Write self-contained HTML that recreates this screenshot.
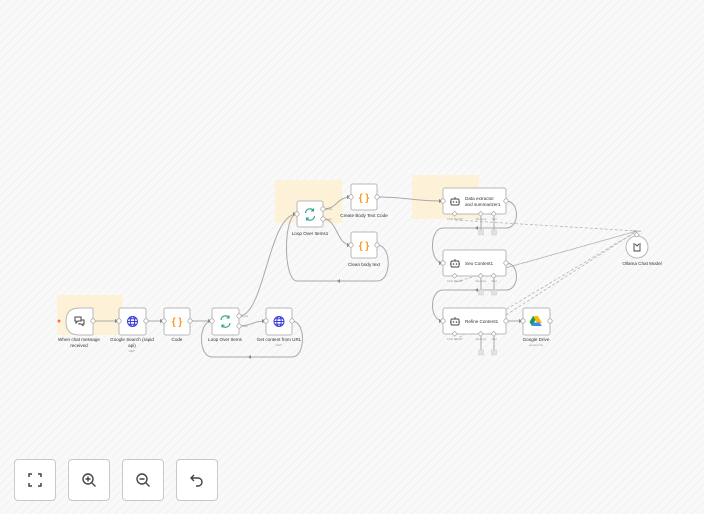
<!DOCTYPE html>
<html><head><meta charset="utf-8"><style>
html,body{margin:0;padding:0}
body{width:704px;height:514px;overflow:hidden;background:#f7f7f7;font-family:"Liberation Sans",sans-serif;position:relative}
.btn{position:absolute;top:459px;width:42px;height:42px;border:1px solid #c9c9cc;border-radius:4px;background:#fff;box-sizing:border-box}
.btn svg{position:absolute;left:12px;top:12px}
</style></head><body>
<svg width="704" height="514" style="position:absolute;left:0;top:0" font-family="Liberation Sans, sans-serif">
<defs>
<pattern id="st" width="6" height="6" patternUnits="userSpaceOnUse" patternTransform="rotate(45)">
<rect width="6" height="6" fill="#f9f9f9"/><rect width="1" height="6" fill="#f1f1f1"/>
</pattern>
</defs>
<rect width="704" height="514" fill="url(#st)"/>
<rect x="57" y="295" width="66" height="40" fill="#fdf2d8"/>
<rect x="275" y="180" width="67" height="43" fill="#fdf2d8"/>
<rect x="412" y="175" width="67" height="44" fill="#fdf2d8"/>
<g fill="none" stroke="#a9a9a9" stroke-width="1">
<path d="M93 321 H119"/><path d="M146 321 H164"/><path d="M190 321 H212"/>
<path d="M239 326 C252 326,252 321,266 321"/>
<path d="M292 321 C306 321,306 357,292 357 H212 C198 357,198 321,212 321"/>
<path d="M239 316 C265 316,268 214,297 214"/>
<path d="M323 209 C338 209,336 197,351 197"/>
<path d="M323 219 C338 219,336 245,351 245"/>
<path d="M377 245 C392 245,392 281,377 281 H297 C283 281,283 214,297 214"/>
<path d="M377 197 C410 197,410 201,443 201"/>
<path d="M506 201 C520 201,520 228,506 228 H443 C429 228,429 263,443 263"/>
<path d="M506 263 C520 263,520 290,506 290 H443 C429 290,429 321,443 321"/>
<path d="M506 321 H523"/>
<path d="M481 214 V230"/><path d="M494 214 V230"/>
<path d="M481 276 V290"/><path d="M494 276 V290"/>
<path d="M481 334 V350"/><path d="M494 334 V350"/>
</g>
<g fill="none" stroke="#b5b5b5" stroke-width="0.8" stroke-dasharray="3 2">
<path d="M455 220 L637 231"/><path d="M506 268 L637 231"/><path d="M506 315 L637 231"/><path d="M455 282 L637 231"/><path d="M455 340 L637 231"/>
</g>
<g fill="#888"><path d="M119 321 l-4 -2 v4z"/><path d="M164 321 l-4 -2 v4z"/><path d="M212 321 l-4 -2 v4z"/><path d="M266 321 l-4 -2 v4z"/><path d="M297 214 l-4 -2 v4z"/><path d="M351 197 l-4 -2 v4z"/><path d="M351 245 l-4 -2 v4z"/><path d="M443 201 l-4 -2 v4z"/><path d="M443 263 l-4 -2 v4z"/><path d="M443 321 l-4 -2 v4z"/><path d="M523 321 l-4 -2 v4z"/>
<path d="M248 357 l3 -2 v4z"/><path d="M337 281 l3 -2 v4z"/><path d="M475 228 l3 -2 v4z"/><path d="M475 290 l3 -2 v4z"/></g>
<g fill="#e2e2e2" stroke="#ccc" stroke-width="0.5">
<rect x="478.5" y="230" width="5" height="5"/><rect x="491.5" y="230" width="5" height="5"/>
<rect x="478.5" y="290" width="5" height="5"/><rect x="491.5" y="290" width="5" height="5"/>
<rect x="478.5" y="350" width="5" height="5"/><rect x="491.5" y="350" width="5" height="5"/>
</g>
<g fill="#fff" stroke="#b8b8b8" stroke-width="1">
<path d="M79 308 H92 Q93 308 93 309 V334 Q93 335 92 335 H79 Q66 335 66 321.5 Q66 308 79 308Z"/>
<rect x="119" y="308" width="27" height="27" rx="2"/>
<rect x="164" y="308" width="26" height="27" rx="2"/>
<rect x="212" y="308" width="27" height="27" rx="2"/>
<rect x="266" y="308" width="26" height="27" rx="2"/>
<rect x="297" y="201" width="26" height="26" rx="2"/>
<rect x="351" y="184" width="26" height="26" rx="2"/>
<rect x="351" y="232" width="26" height="26" rx="2"/>
<rect x="443" y="188" width="63" height="26" rx="2"/>
<rect x="443" y="250" width="63" height="26" rx="2"/>
<rect x="443" y="308" width="63" height="26" rx="2"/>
<rect x="523" y="308" width="27" height="27" rx="2"/>
<circle cx="637" cy="247" r="11"/>
</g>
<g fill="#fff" stroke="#999" stroke-width="0.7">
<circle cx="93" cy="321" r="2.2"/><circle cx="119" cy="321" r="2.2"/><circle cx="146" cy="321" r="2.2"/><circle cx="164" cy="321" r="2.2"/><circle cx="190" cy="321" r="2.2"/><circle cx="212" cy="321" r="2.2"/><circle cx="239" cy="316" r="2.2"/><circle cx="239" cy="326" r="2.2"/><circle cx="266" cy="321" r="2.2"/><circle cx="292" cy="321" r="2.2"/>
<circle cx="297" cy="214" r="2.2"/><circle cx="323" cy="209" r="2.2"/><circle cx="323" cy="219" r="2.2"/><circle cx="351" cy="197" r="2.2"/><circle cx="377" cy="197" r="2.2"/><circle cx="351" cy="245" r="2.2"/><circle cx="377" cy="245" r="2.2"/>
<circle cx="443" cy="201" r="2.2"/><circle cx="506" cy="201" r="2.2"/><circle cx="443" cy="263" r="2.2"/><circle cx="506" cy="263" r="2.2"/><circle cx="443" cy="321" r="2.2"/><circle cx="506" cy="321" r="2.2"/><circle cx="523" cy="321" r="2.2"/><circle cx="550" cy="321" r="2.2"/>
</g>
<g fill="#fff" stroke="#999" stroke-width="0.6">
<rect x="453" y="212" width="3.5" height="3.5" transform="rotate(45 454.7 213.7)"/><rect x="479" y="212" width="3.5" height="3.5" transform="rotate(45 480.7 213.7)"/><rect x="492" y="212" width="3.5" height="3.5" transform="rotate(45 493.7 213.7)"/>
<rect x="453" y="274" width="3.5" height="3.5" transform="rotate(45 454.7 275.7)"/><rect x="479" y="274" width="3.5" height="3.5" transform="rotate(45 480.7 275.7)"/><rect x="492" y="274" width="3.5" height="3.5" transform="rotate(45 493.7 275.7)"/>
<rect x="453" y="332" width="3.5" height="3.5" transform="rotate(45 454.7 333.7)"/><rect x="479" y="332" width="3.5" height="3.5" transform="rotate(45 480.7 333.7)"/><rect x="492" y="332" width="3.5" height="3.5" transform="rotate(45 493.7 333.7)"/>
<rect x="635" y="233" width="3.5" height="3.5" transform="rotate(45 636.7 234.7)"/>
</g>
<circle cx="59" cy="321" r="1.5" fill="#ff6d5a"/>
<g fill="none" stroke="#444" stroke-width="1">
<path d="M75 317 h6 v4 h-3 l-2 2 v-2 h-1z"/><path d="M81 320 h3 v4 h-1 v1.5 l-2 -1.5 h-2 v-1"/>
</g>
<g fill="none" stroke="#3b3bdc" stroke-width="1">
<circle cx="132.5" cy="321.5" r="5"/><ellipse cx="132.5" cy="321.5" rx="2.2" ry="5"/><path d="M127.5 321.5 h10 M128.5 318.7 h8 M128.5 324.3 h8"/>
<circle cx="279" cy="321.5" r="5"/><ellipse cx="279" cy="321.5" rx="2.2" ry="5"/><path d="M274 321.5 h10 M275 318.7 h8 M275 324.3 h8"/>
</g>
<g font-size="10" fill="#ff9922" text-anchor="middle" font-weight="bold">
<text x="177" y="325">{ }</text><text x="364" y="201">{ }</text><text x="364" y="249">{ }</text>
</g>
<g fill="none" stroke="#2a9d8f" stroke-width="1.1">
<path d="M221 320 a4.5 4.5 0 0 1 8 -2.5 M230 323 a4.5 4.5 0 0 1 -8 2.5"/><path d="M229 315.5 v2.5 h-2.5 M222 327.5 v-2.5 h2.5"/>
<path d="M305.5 213 a4.5 4.5 0 0 1 8 -2.5 M314.5 216 a4.5 4.5 0 0 1 -8 2.5"/><path d="M313.5 208.5 v2.5 h-2.5 M306.5 220.5 v-2.5 h2.5"/>
</g>
<g fill="none" stroke="#444" stroke-width="0.9">
<rect x="451" y="199" width="8" height="6" rx="1"/><path d="M455 197 v2 M450 202 h1 M459 202 h1"/>
<rect x="451" y="261" width="8" height="6" rx="1"/><path d="M455 259 v2 M450 264 h1 M459 264 h1"/>
<rect x="451" y="319" width="8" height="6" rx="1"/><path d="M455 317 v2 M450 322 h1 M459 322 h1"/>
<path d="M634 243 v8 h6 v-8 M635 244 l2 2 l2 -2"/>
</g>
<g fill="#444"><circle cx="453.5" cy="202" r=".8"/><circle cx="456.5" cy="202" r=".8"/><circle cx="453.5" cy="264" r=".8"/><circle cx="456.5" cy="264" r=".8"/><circle cx="453.5" cy="322" r=".8"/><circle cx="456.5" cy="322" r=".8"/></g>
<g>
<path d="M533 316 h5 l4 7 h-5z" fill="#ffba00"/><path d="M533 316 l-3.5 6 l2.5 4 l3.5 -6z" fill="#0f9d58"/><path d="M532 326 h10 l-2.5 -3.5 h-5.5z" fill="#4285f4"/>
</g>
<g font-size="4.6" fill="#333" text-anchor="middle">
<text x="79" y="341">When chat message</text><text x="79" y="347">received</text>
<text x="132" y="341">Google Search (rapid</text><text x="132" y="347">api)</text>
<text x="177" y="341">Code</text>
<text x="225" y="341">Loop Over Items</text>
<text x="279" y="341">Get content from URL</text>
<text x="310" y="235">Loop Over Items1</text>
<text x="364" y="217">Create Body Text Code</text>
<text x="364" y="266">Clean body text</text>
<text x="536" y="341">Google Drive</text>
<text x="642" y="265">Ollama Chat Model</text>
</g>
<g font-size="4.6" fill="#333">
<text x="465" y="200">Data extractor</text><text x="465" y="206">and summarizer1</text>
<text x="465" y="265">Seo Content1</text>
<text x="465" y="323">Refine Content1</text>
</g>
<g font-size="3" fill="#999" text-anchor="middle">
<text x="132" y="352">GET:</text><text x="279" y="346">GET:</text><text x="536" y="346">upload: file</text>
<text x="455" y="220">Chat Model*</text><text x="481" y="220">Memory</text><text x="494" y="220">Tool</text>
<text x="455" y="282">Chat Model*</text><text x="481" y="282">Memory</text><text x="494" y="282">Tool</text>
<text x="455" y="340">Chat Model*</text><text x="481" y="340">Memory</text><text x="494" y="340">Tool</text>
<text x="637" y="232">Model</text>
<text x="245" y="317">done</text><text x="245" y="327">loop</text>
<text x="329" y="210">done</text><text x="329" y="220">loop</text>
</g>
</svg>
<div class="btn" style="left:14px"><svg width="16" height="16" fill="none" stroke="#444" stroke-width="1.5"><path d="M2 5V2h3M11 2h3v3M14 11v3h-3M5 14H2v-3"/></svg></div>
<div class="btn" style="left:68px"><svg width="16" height="16" fill="none" stroke="#444" stroke-width="1.4"><circle cx="7" cy="7" r="5"/><path d="M11 11l3.5 3.5M7 4.5v5M4.5 7h5"/></svg></div>
<div class="btn" style="left:122px"><svg width="16" height="16" fill="none" stroke="#444" stroke-width="1.4"><circle cx="7" cy="7" r="5"/><path d="M11 11l3.5 3.5M4.5 7h5"/></svg></div>
<div class="btn" style="left:176px"><svg width="16" height="16" fill="none" stroke="#444" stroke-width="1.4"><path d="M5 3L2 6l3 3M2 6h7a4 4 0 0 1 0 8H7"/></svg></div>
</body></html>
